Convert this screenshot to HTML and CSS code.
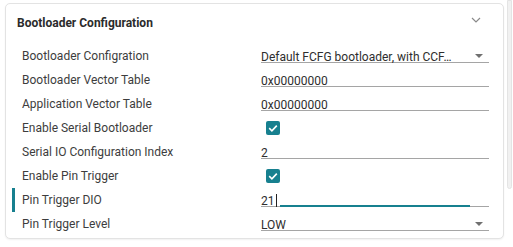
FILE: index.html
```html
<!DOCTYPE html>
<html>
<head>
<meta charset="utf-8">
<link rel="stylesheet" href="styles.css">
</head>
<body>
<div class="card">
  <div class="card-header">
    <span class="title">Bootloader Configuration</span>
    <svg class="chevron" width="10" height="6" viewBox="0 0 10 6"><polyline points="1,1 5,5 9,1" fill="none" stroke="#8a8a8a" stroke-width="1.2"/></svg>
  </div>
  <div class="rows">
    <div class="row">
      <div class="label">Bootloader Configration</div>
      <div class="field select"><span class="val">Default FCFG bootloader, with CCF…</span><span class="arrow"></span></div>
    </div>
    <div class="row">
      <div class="label">Bootloader Vector Table</div>
      <div class="field"><span class="val">0x00000000</span></div>
    </div>
    <div class="row">
      <div class="label">Application Vector Table</div>
      <div class="field"><span class="val">0x00000000</span></div>
    </div>
    <div class="row">
      <div class="label">Enable Serial Bootloader</div>
      <div class="check-cell"><span class="checkbox"><svg width="14" height="14" viewBox="0 0 14 14"><polyline points="3.2,7.2 5.9,9.8 10.8,4.6" fill="none" stroke="#fff" stroke-width="1.6"/></svg></span></div>
    </div>
    <div class="row">
      <div class="label">Serial IO Configuration Index</div>
      <div class="field"><span class="val">2</span></div>
    </div>
    <div class="row">
      <div class="label">Enable Pin Trigger</div>
      <div class="check-cell"><span class="checkbox"><svg width="14" height="14" viewBox="0 0 14 14"><polyline points="3.2,7.2 5.9,9.8 10.8,4.6" fill="none" stroke="#fff" stroke-width="1.6"/></svg></span></div>
    </div>
    <div class="row active">
      <div class="label">Pin Trigger DIO</div>
      <div class="field focused"><span class="val">21</span><span class="caret"></span><span class="focus-line"></span></div>
    </div>
    <div class="row">
      <div class="label">Pin Trigger Level</div>
      <div class="field select"><span class="val">LOW</span><span class="arrow"></span></div>
    </div>
  </div>
</div>
<div class="scrollbar"></div>
</body>
</html>
```

FILE: styles.css
```css
html, body {
  margin: 0;
  padding: 0;
  background: #ffffff;
}
body {
  display: flex;
  align-items: flex-start;
  font-family: Roboto, "Noto Sans", sans-serif;
  width: 513px;
  height: 247px;
  overflow: hidden;
}
.card {
  box-sizing: border-box;
  margin: 3px 0 0 5px;
  width: 499px;
  height: 236px;
  border: 1px solid #e3e3e3;
  border-radius: 5px;
  box-shadow: 0 1px 2px rgba(0,0,0,0.06);
  background: #fff;
}
.card-header {
  display: flex;
  align-items: flex-start;
  justify-content: space-between;
  padding: 9px 22px 11px 11px;
  height: 20px;
}
.title {
  font-weight: 700;
  font-size: 12px;
  line-height: 20px;
  color: #2b2b2b;
}
.chevron {
  display: block;
  margin-top: 4px;
}
.rows {
  display: flex;
  flex-direction: column;
}
.row {
  position: relative;
  display: grid;
  grid-template-columns: 239px 228px;
  height: 24px;
  padding-left: 16px;
}
.row.active::before {
  content: "";
  position: absolute;
  left: 6px;
  top: 0;
  width: 3px;
  height: 24px;
  background: #17808f;
}
.label {
  font-size: 12px;
  padding-top: 1px;
  line-height: 23px;
  color: #3d3d3d;
  white-space: nowrap;
}
.field {
  position: relative;
  display: flex;
  align-items: flex-start;
  box-sizing: border-box;
  height: 19px;
  padding-top: 7px;
  border-bottom: 1px solid #a5a5a5;
  font-size: 12px;
  line-height: 12px;
  color: #2e2e2e;
}
.val {
  white-space: nowrap;
  overflow: hidden;
}
.select .val {
  flex: 1;
}
.arrow {
  width: 0;
  height: 0;
  margin: 3px 6px 0 0;
  border-left: 4px solid transparent;
  border-right: 4px solid transparent;
  border-top: 4px solid #707070;
}
.caret {
  width: 1px;
  height: 13px;
  margin: -1px 0 0 1px;
  background: #222;
}
.focus-line {
  position: absolute;
  left: 19px;
  right: 19px;
  bottom: -1px;
  height: 2px;
  background: #17808f;
}
.check-cell {
  display: flex;
  align-items: center;
  padding-left: 5px;
  height: 24px;
}
.checkbox {
  display: block;
  width: 14px;
  height: 14px;
  border-radius: 2px;
  background: #17808f;
}
.checkbox svg {
  display: block;
}
.scrollbar {
  box-sizing: border-box;
  margin-left: 3px;
  width: 5px;
  height: 189px;
  background: #f1f1f1;
  border: 1px solid #e4e4e4;
  border-radius: 0 0 3px 3px;
}
```
